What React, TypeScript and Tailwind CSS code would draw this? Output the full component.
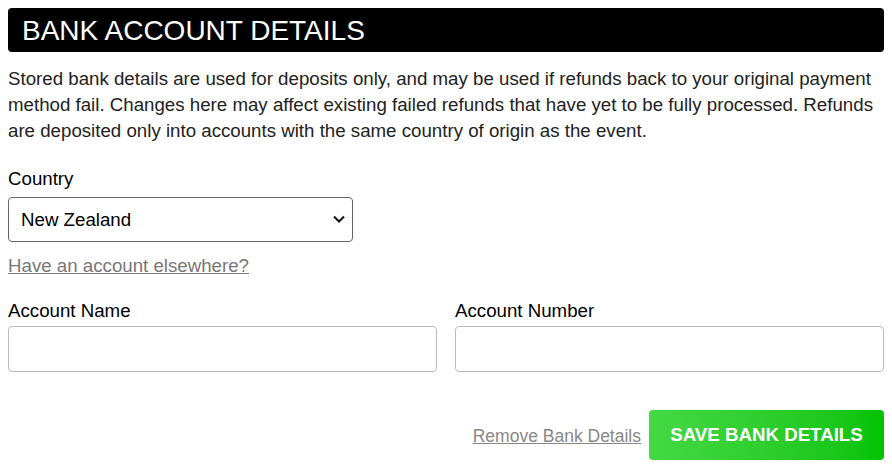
const BankAccountDetails = () => {
  return (
    <section
      className="bg-white px-2 pt-2 text-[18.7px] leading-[26px] text-black"
      style={{ fontFamily: '"Liberation Sans", Arial, sans-serif' }}
    >
      <h2 className="flex h-[44px] items-center rounded bg-black px-[14px] pt-[1px] text-[28px] leading-[32px] text-white">
        BANK ACCOUNT DETAILS
      </h2>
      <p className="mt-[14px] text-[#222]">
        Stored bank details are used for deposits only, and may be used if
        refunds back to your original payment method fail. Changes here may
        affect existing failed refunds that have yet to be fully processed.
        Refunds are deposited only into accounts with the same country of
        origin as the event.
      </p>
      <div className="mt-[22px]">
        <label className="block">Country</label>
        <div className="relative mt-[5px] w-[345px]">
          <select className="h-[45px] w-full appearance-none rounded border border-[#666] bg-white pl-3 text-black outline-none">
            <option>New Zealand</option>
          </select>
          <svg
            className="pointer-events-none absolute top-[18px] right-[8px] h-[8px] w-[12px]"
            viewBox="0 0 12 8"
            fill="none"
            stroke="#111"
            strokeWidth="2"
          >
            <path d="M1 1.5l5 5 5-5" />
          </svg>
        </div>
        <a href="#" className="mt-[11px] inline-block text-[#777] underline">
          Have an account elsewhere?
        </a>
      </div>
      <div className="mt-[19px] grid grid-cols-2 gap-[18px]">
        <div>
          <label className="block">Account Name</label>
          <input className="mt-[2px] h-[46px] w-full rounded border border-[#bbb] outline-none" />
        </div>
        <div>
          <label className="block">Account Number</label>
          <input className="mt-[2px] h-[46px] w-full rounded border border-[#bbb] outline-none" />
        </div>
      </div>
      <div className="mt-[38px] flex items-center justify-end gap-2">
        <a href="#" className="pt-[2px] text-[17.5px] text-[#888] underline">
          Remove Bank Details
        </a>
        <button className="h-[50px] w-[235px] rounded bg-gradient-to-r from-[#44d944] to-[#00c300] font-bold text-white">
          SAVE BANK DETAILS
        </button>
      </div>
    </section>
  );
};

export default function App() {
  return <BankAccountDetails />;
}
